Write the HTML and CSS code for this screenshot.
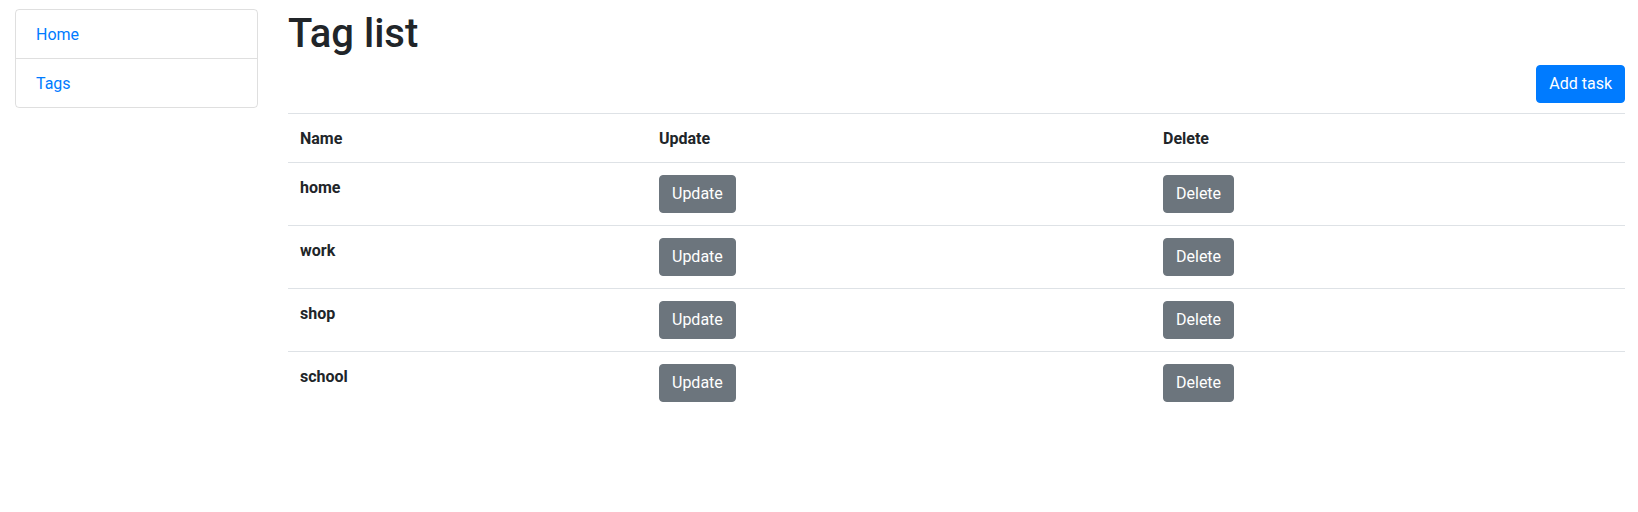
FILE: index.html
```html
<!DOCTYPE html>
<html lang="en">
<head>
<meta charset="utf-8">
<title>Tag list</title>
<link rel="stylesheet" href="styles.css">
</head>
<body>
<div class="page">
  <aside class="sidebar">
    <ul class="list-group">
      <li class="list-item"><a href="#">Home</a></li>
      <li class="list-item"><a href="#">Tags</a></li>
    </ul>
  </aside>
  <main class="main">
    <h1 class="title">Tag list</h1>
    <div class="toolbar">
      <button class="btn btn-primary">Add task</button>
    </div>
    <table class="table">
      <thead>
        <tr>
          <th class="col-name">Name</th>
          <th class="col-update">Update</th>
          <th class="col-delete">Delete</th>
        </tr>
      </thead>
      <tbody>
        <tr>
          <th>home</th>
          <td><button class="btn btn-secondary">Update</button></td>
          <td><button class="btn btn-secondary">Delete</button></td>
        </tr>
        <tr>
          <th>work</th>
          <td><button class="btn btn-secondary">Update</button></td>
          <td><button class="btn btn-secondary">Delete</button></td>
        </tr>
        <tr>
          <th>shop</th>
          <td><button class="btn btn-secondary">Update</button></td>
          <td><button class="btn btn-secondary">Delete</button></td>
        </tr>
        <tr>
          <th>school</th>
          <td><button class="btn btn-secondary">Update</button></td>
          <td><button class="btn btn-secondary">Delete</button></td>
        </tr>
      </tbody>
    </table>
  </main>
</div>
</body>
</html>
```
FILE: styles.css
```css
* { box-sizing: border-box; }
html, body { margin: 0; padding: 0; background: #fff; }
body {
  font-family: Roboto, "Liberation Sans", sans-serif;
  font-size: 16px;
  line-height: 1.5;
  color: #212529;
}
.page {
  display: grid;
  grid-template-columns: 243px 1337px;
  column-gap: 30px;
  padding: 9px 0 0 15px;
}
.list-group {
  list-style: none;
  margin: 0;
  padding: 0;
  border: 1px solid rgba(0,0,0,.125);
  border-radius: 4px;
}
.list-item {
  padding: 13px 20px 11px;
  line-height: 24px;
}
.list-item + .list-item { border-top: 1px solid rgba(0,0,0,.125); }
.list-item a { color: #007bff; text-decoration: none; }
.title {
  margin: 0 0 8px;
  padding-top: 1px;
  font-size: 40px;
  font-weight: 500;
  line-height: 47px;
}
.toolbar {
  display: flex;
  justify-content: flex-end;
  margin-bottom: 10px;
}
.btn {
  font-family: inherit;
  font-size: 16px;
  line-height: 24px;
  padding: 6px 12px;
  border: 1px solid transparent;
  border-radius: 4px;
  color: #fff;
  cursor: pointer;
}
.btn-primary { background: #007bff; border-color: #007bff; }
.btn-secondary { background: #6c757d; border-color: #6c757d; }
.table {
  width: 100%;
  border-collapse: collapse;
}
.table th, .table td {
  padding: 12px;
  border-top: 1px solid #dee2e6;
  text-align: left;
  vertical-align: top;
  line-height: 24px;
}
.table th {
  font-weight: 700;
  padding-top: 13px;
  padding-bottom: 11px;
}
.col-name { width: 359px; }
.col-update { width: 504px; }
.col-delete { width: 474px; }
```
